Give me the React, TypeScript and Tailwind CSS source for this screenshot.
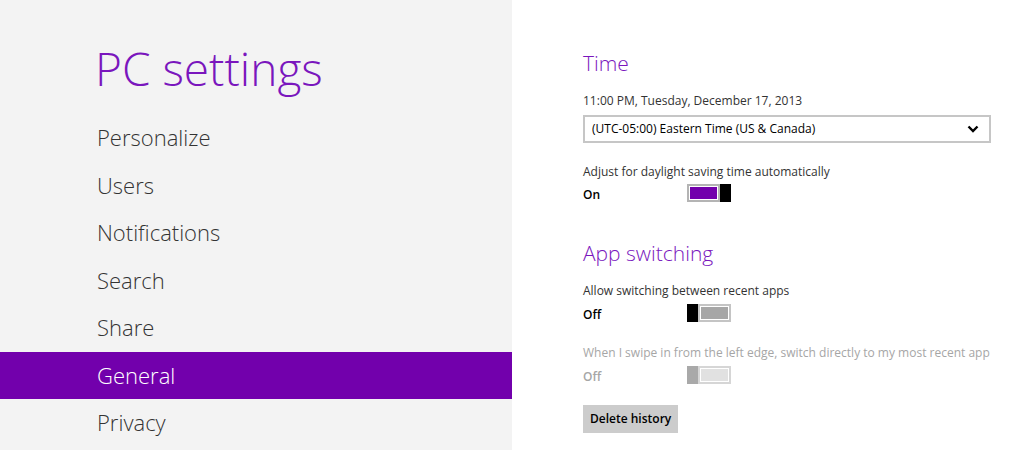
import React from "react";

const navItems = ["Personalize", "Users", "Notifications", "Search", "Share", "General", "Privacy"];

const font = { fontFamily: '"Open Sans", "Noto Sans", sans-serif' };

function Toggle({ on, disabled }: { on: boolean; disabled?: boolean }) {
  const thumb = disabled ? "bg-[#a9a9a9]" : "bg-black";
  const border = disabled ? "border-[#d6d6d6]" : on ? "border-[#b4b4b4]" : "border-[#c4c4c4]";
  const fill = disabled ? "bg-[#e1e1e1]" : on ? "bg-[#7200ac]" : "bg-[#a6a6a6]";
  return (
    <div className="flex h-[18px] w-[44px]">
      {!on && <div className={`h-full w-[11px] ${thumb}`} />}
      <div className={`h-full flex-1 border-2 bg-white p-px ${border}`}>
        <div className={`h-full w-full ${fill}`} />
      </div>
      {on && <div className={`h-full w-[11px] ${thumb}`} />}
    </div>
  );
}

function ToggleRow({ label, on, disabled }: { label: string; on: boolean; disabled?: boolean }) {
  return (
    <div className="flex h-[18px] items-center">
      <span
        className={`mt-[3px] w-[104px] text-[12px] font-semibold ${disabled ? "text-[#a6a6a6]" : "text-black"}`}
      >
        {label}
      </span>
      <Toggle on={on} disabled={disabled} />
    </div>
  );
}

export default function App() {
  return (
    <div className="flex h-[450px] w-[1024px] overflow-hidden bg-white" style={font}>
      <aside className="h-full w-[512px] shrink-0 bg-[#f3f3f3]">
        <h1 className="ml-[95px] mt-[38px] h-[76px] text-[46px] font-light leading-[60px] text-[#7a16bd]">
          PC settings
        </h1>
        {navItems.map((item) => (
          <div
            key={item}
            className={`flex h-[47.5px] items-center pl-[97px] text-[22px] font-light ${
              item === "General" ? "bg-[#7200ac] text-white" : "text-[#333333]"
            }`}
          >
            {item}
          </div>
        ))}
      </aside>

      <main className="flex-1 pl-[71px] pt-[49px] text-[#333333]">
        <h2 className="h-[28px] text-[21px] font-light leading-[28px] text-[#7a16bd]">Time</h2>
        <p className="mt-[16px] h-[16px] text-[12px] leading-[16px]">11:00 PM, Tuesday, December 17, 2013</p>
        <div className="mt-[6px] flex h-[28px] w-[408px] items-center justify-between border-2 border-[#c6c6c6] pl-[7px] pr-[10px] text-[12px] text-black">
          <span>(UTC-05:00) Eastern Time (US &amp; Canada)</span>
          <svg width="12" height="8" viewBox="0 0 12 8">
            <polyline points="1.5,1.5 6,6 10.5,1.5" fill="none" stroke="black" strokeWidth="2.4" />
          </svg>
        </div>
        <p className="mt-[21px] h-[16px] text-[12px] leading-[16px]">Adjust for daylight saving time automatically</p>
        <div className="mt-[4px]">
          <ToggleRow label="On" on={true} />
        </div>

        <h2 className="mt-[37px] h-[28px] text-[21px] font-light leading-[28px] text-[#7a16bd]">App switching</h2>
        <p className="mt-[16px] h-[16px] text-[12px] leading-[16px]">Allow switching between recent apps</p>
        <div className="mt-[5px]">
          <ToggleRow label="Off" on={false} />
        </div>
        <p className="mt-[23px] h-[16px] text-[12px] leading-[16px] text-[#a6a6a6]">
          When I swipe in from the left edge, switch directly to my most recent app
        </p>
        <div className="mt-[5px]">
          <ToggleRow label="Off" on={false} disabled />
        </div>
        <button className="mt-[21px] h-[28px] bg-[#cccccc] px-[7px] text-[12px] font-semibold text-black">
          Delete history
        </button>
      </main>
    </div>
  );
}
